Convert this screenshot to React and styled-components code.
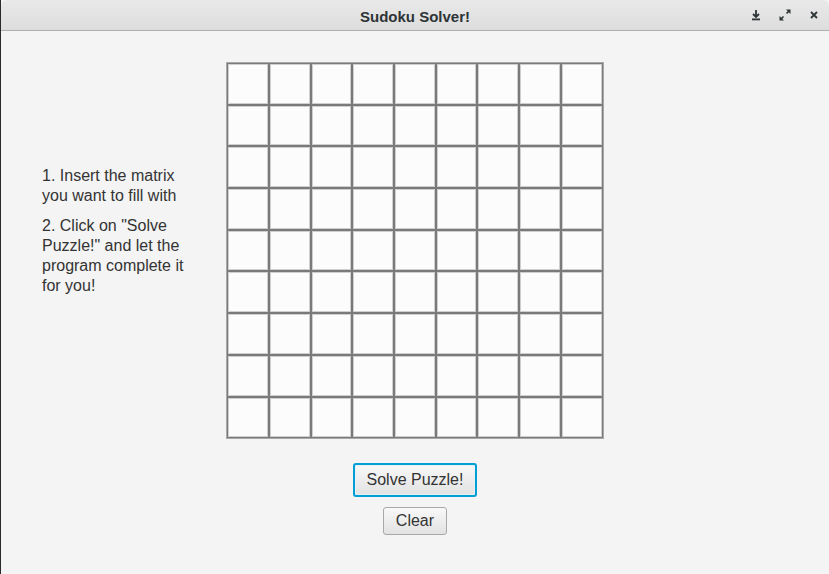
import React from "react";
import styled, { createGlobalStyle } from "styled-components";

const Global = createGlobalStyle`
  html, body { margin: 0; padding: 0; background: #f4f4f4; }
  body { font-family: "Liberation Sans", Arial, sans-serif; }
  #root { width: 829px; height: 574px; }
`;

const Window = styled.div`
  width: 829px;
  height: 574px;
  display: flex;
  flex-direction: column;
  background: #f4f4f4;
  overflow: hidden;
  border-left: 1px solid #2a2a2a;
  box-sizing: border-box;
`;

const TitleBar = styled.div`
  height: 30px;
  flex: none;
  position: relative;
  display: flex;
  align-items: center;
  justify-content: center;
  background: linear-gradient(#e9e9e9, #dddddd);
  border-bottom: 1px solid #aeaeae;
  border-top-left-radius: 6px;
  border-top-right-radius: 6px;
`;

const Title = styled.div`
  font-family: "Liberation Sans", Arial, sans-serif;
  font-weight: bold;
  font-size: 15px;
  color: #2e3436;
  padding-top: 2px;
`;

const Controls = styled.div`
  position: absolute;
  right: 7px;
  top: 0;
  height: 30px;
  display: flex;
  align-items: center;
  gap: 13px;
`;

const CtlIcon = styled.svg`
  width: 16px;
  height: 16px;
  display: block;
`;

const Body = styled.div`
  flex: 1;
  display: grid;
  grid-template-columns: 1fr auto 1fr;
  padding-top: 31px;
`;

const Instructions = styled.div`
  padding-left: 41px;
  padding-top: 104px;
  display: flex;
  flex-direction: column;
  gap: 10px;
  width: 150px;
`;

const Para = styled.p`
  margin: 0;
  font-size: 16px;
  line-height: 20px;
  color: #333333;
`;

const Center = styled.div`
  display: flex;
  flex-direction: column;
  align-items: center;
`;

const Board = styled.div`
  display: grid;
  grid-template-columns: repeat(9, 41.7px);
  grid-template-rows: repeat(9, 41.7px);
  width: 375.3px;
  box-sizing: content-box;
  border: 1px solid #a8a8a8;
`;

const Cell = styled.input`
  box-sizing: border-box;
  width: 100%;
  height: 100%;
  margin: 0;
  padding: 0;
  border: 1px solid #7a7a7a;
  box-shadow: inset 0 0 0 1px #cfcfcf;
  background: #fcfcfc;
  text-align: center;
  font-family: "Liberation Sans", Arial, sans-serif;
  font-size: 16px;
  color: #333;
  outline: none;
`;

const Button = styled.button`
  font-family: "Liberation Sans", Arial, sans-serif;
  font-size: 16px;
  color: #333333;
  background: linear-gradient(#f8f8f8, #e2e2e2);
  border: ${(p) => (p.$focused ? "2px solid #039ed3" : "1px solid #a8a8a8")};
  box-shadow: ${(p) => (p.$focused ? "inset 0 0 0 1px #e4f2f8" : "none")};
  border-radius: 3px;
  padding: ${(p) => (p.$focused ? "6px 12px" : "4px 12px")};
  line-height: 18px;
  cursor: pointer;
`;

const Buttons = styled.div`
  display: flex;
  flex-direction: column;
  align-items: center;
  gap: 10px;
  margin-top: 24px;
`;

export default function App() {
  const cells = Array.from({ length: 81 });
  return (
    <>
      <Global />
      <Window>
        <TitleBar>
          <Title>Sudoku Solver!</Title>
          <Controls>
            <CtlIcon viewBox="0 0 16 16">
              <path d="M8 3v7M5 7l3 3 3-3" stroke="#2e3436" strokeWidth="1.8" fill="none" />
              <rect x="4" y="11.5" width="8" height="1.8" fill="#2e3436" />
            </CtlIcon>
            <CtlIcon viewBox="0 0 16 16">
              <path d="M9 2.5h4.5V7z" fill="#2e3436" />
              <path d="M7 13.5H2.5V9z" fill="#2e3436" />
              <path d="M12.5 3.5L9.5 6.5M3.5 12.5l3-3" stroke="#2e3436" strokeWidth="1.6" />
            </CtlIcon>
            <CtlIcon viewBox="0 0 16 16">
              <path d="M5 5l6 6M11 5l-6 6" stroke="#2e3436" strokeWidth="1.8" />
            </CtlIcon>
          </Controls>
        </TitleBar>
        <Body>
          <Instructions>
            <Para>1. Insert the matrix you want to fill with</Para>
            <Para>2. Click on "Solve Puzzle!" and let the program complete it for you!</Para>
          </Instructions>
          <Center>
            <Board>
              {cells.map((_, i) => (
                <Cell key={i} maxLength={1} />
              ))}
            </Board>
            <Buttons>
              <Button $focused>Solve Puzzle!</Button>
              <Button>Clear</Button>
            </Buttons>
          </Center>
          <div />
        </Body>
      </Window>
    </>
  );
}
